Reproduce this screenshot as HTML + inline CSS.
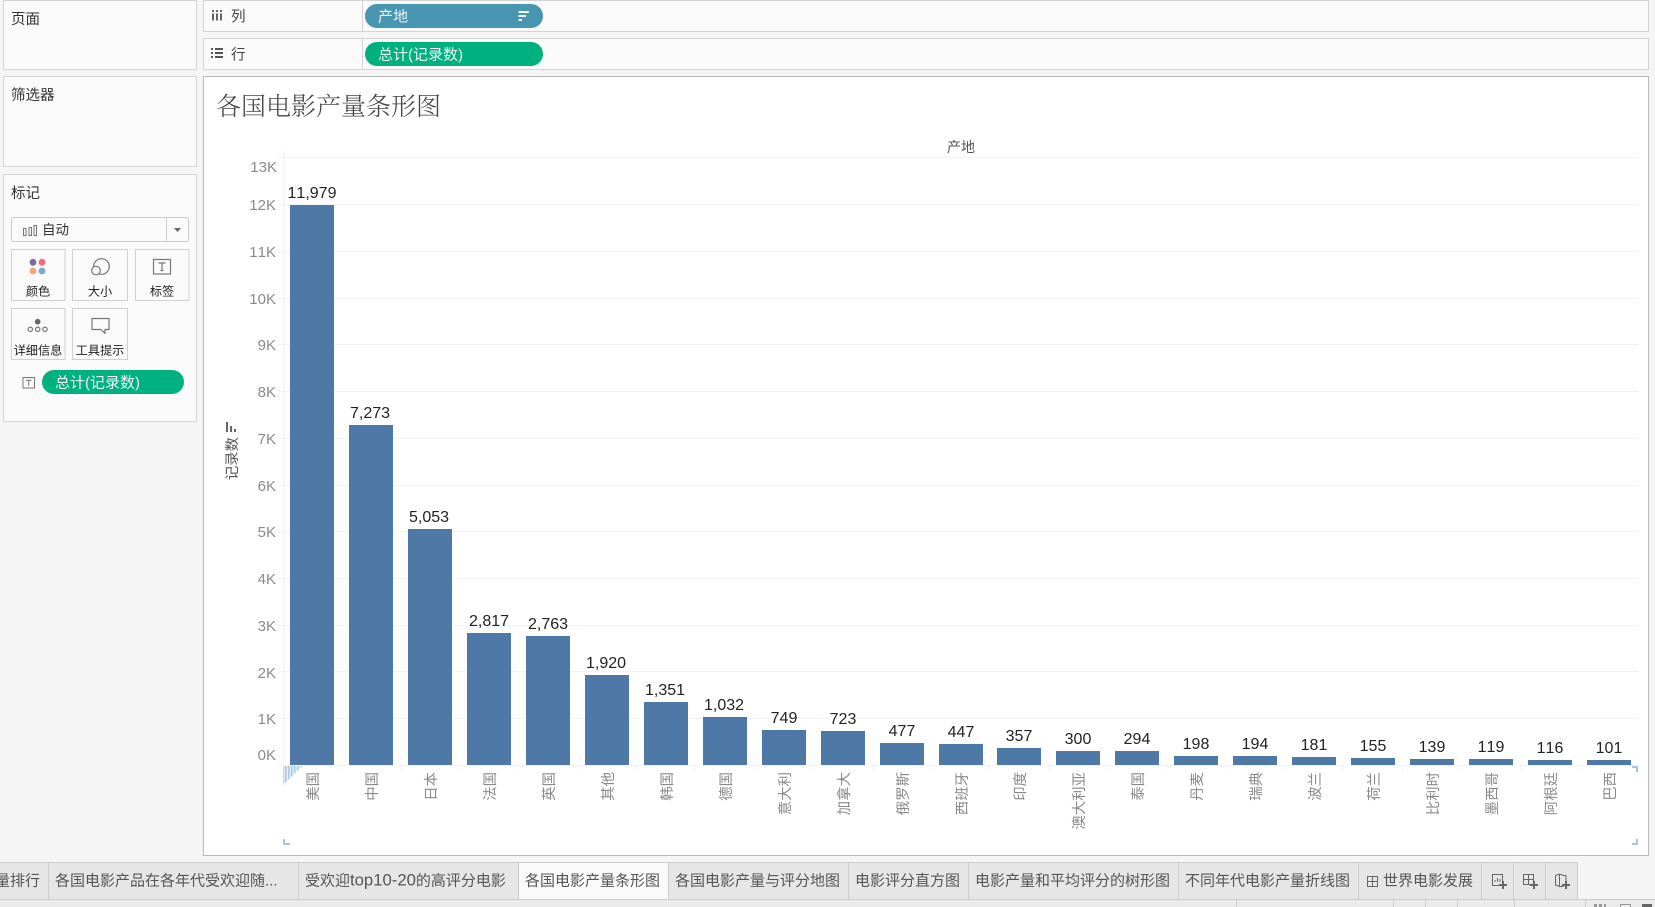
<!DOCTYPE html>
<html lang="zh">
<head>
<meta charset="utf-8">
<title>各国电影产量条形图</title>
<style>
html,body{margin:0;padding:0;width:1655px;height:907px;overflow:hidden;background:#f5f5f5}
svg{display:block}
text{font-family:"Liberation Sans","Noto Sans CJK SC",sans-serif;font-kerning:none}
.h{font-size:14.500px;fill:#333}
.s{font-size:14.500px;fill:#444}
.p{font-size:15px;fill:#eef6f8}
.b{font-size:12.200px;fill:#222;text-anchor:middle}
.t{font-size:15px;fill:#555}
.y{font-size:15px;fill:#8a8a8a;text-anchor:end}
.v{font-size:16px;fill:#222;text-anchor:middle}
.c{font-size:14.400px;fill:#8a8a8a;text-anchor:end}
.panel{fill:#fafafa;stroke:#d4d4d4;stroke-width:1}
.g{stroke:#f3f3f3;stroke-width:1}
.bar{fill:#4e79a7}
.ic{fill:none;stroke:#777;stroke-width:1.200}
</style>
</head>
<body>
<svg width="1655" height="907" viewBox="0 0 1655 907" xmlns="http://www.w3.org/2000/svg">
<defs>
<pattern id="hatch" width="3" height="3" patternUnits="userSpaceOnUse"><rect width="3" height="3" fill="#e3edf6"/><rect width="1.500" height="3" fill="#a9c8e2"/></pattern>
</defs>
<rect width="1655" height="907" fill="#f5f5f5"/>

<!-- left panels -->
<rect class="panel" x="3.500" y="0.500" width="193" height="69"/>
<text class="h" x="11" y="24">页面</text>
<rect class="panel" x="3.500" y="76.500" width="193" height="90"/>
<text class="h" x="11" y="100">筛选器</text>
<rect class="panel" x="3.500" y="174.500" width="193" height="247"/>
<text class="h" x="11" y="198">标记</text>

<!-- marks dropdown -->
<rect x="11.500" y="217.500" width="177" height="24" rx="2" fill="#fafafa" stroke="#ccc"/>
<line x1="166.500" y1="218" x2="166.500" y2="241" stroke="#ccc"/>
<g fill="none" stroke="#777" stroke-width="1"><rect x="23.500" y="228.500" width="2.500" height="7"/><rect x="29" y="227.500" width="2.500" height="8"/><rect x="34" y="225.500" width="2.500" height="10"/></g>
<text x="42" y="234.500" style="font-size:13.500px;fill:#333">自动</text>
<path d="M174 228h7l-3.500 4z" fill="#666"/>

<!-- marks buttons -->
<g fill="#fafafa" stroke="#d0d0d0">
<rect x="11.500" y="249.500" width="53.500" height="51"/>
<rect x="72.500" y="249.500" width="55" height="51"/>
<rect x="135.500" y="249.500" width="53.500" height="51"/>
<rect x="11.500" y="308.500" width="53.500" height="51"/>
<rect x="72.500" y="308.500" width="55" height="51"/>
</g>
<circle cx="33" cy="262.300" r="3.400" fill="#7b6a9c"/><circle cx="42" cy="262.300" r="3.400" fill="#f0697f"/>
<circle cx="33" cy="271" r="3.400" fill="#f2a77b"/><circle cx="42" cy="271" r="3.400" fill="#7ea6cf"/>
<circle class="ic" cx="101.500" cy="266.500" r="7.800"/><circle cx="96" cy="270.500" r="4.300" fill="#fafafa" stroke="#777" stroke-width="1.200"/>
<rect class="ic" x="153.500" y="259.500" width="17" height="14.500"/>
<path d="M158.500 263h7M162 263v7.500M160.500 270.500h3" fill="none" stroke="#777" stroke-width="1.200"/>
<circle cx="37.700" cy="321.700" r="2.800" fill="#666"/>
<g class="ic"><circle cx="30.300" cy="329.300" r="2.200"/><circle cx="37.700" cy="329.300" r="2.200"/><circle cx="45" cy="329.300" r="2.200"/></g>
<path class="ic" d="M92 318.500h17v11h-4v4l-4-4h-9z" stroke-linejoin="round"/>
<text class="b" x="38" y="295.500">颜色</text>
<text class="b" x="100" y="295.500">大小</text>
<text class="b" x="162" y="295.500">标签</text>
<text class="b" x="38" y="354.500">详细信息</text>
<text class="b" x="100" y="354.500">工具提示</text>

<rect x="23" y="377.500" width="11.500" height="10.500" fill="none" stroke="#777"/>
<path d="M26 380.300h5.500M28.700 380.300v5.500" fill="none" stroke="#777"/>
<rect x="42" y="370" width="142" height="24" rx="12" fill="#00b180"/>
<text class="p" x="55" y="387.500">总计(记录数)</text>

<!-- shelves -->
<rect class="panel" x="203.500" y="0.500" width="1445" height="31"/>
<line x1="362.500" y1="1" x2="362.500" y2="31" stroke="#d4d4d4"/>
<path d="M212 10h2v2h-2zM212 13.500h2v7h-2zM216 10h2v2h-2zM216 13.500h2v7h-2zM220 10h2v2h-2zM220 13.500h2v7h-2z" fill="#666"/>
<text class="s" x="231" y="21.500">列</text>
<rect x="365" y="4" width="178" height="24" rx="12" fill="#4996b2"/>
<text class="p" x="378" y="21.500">产地</text>
<path d="M518.500 11h10.500v2h-10.500zM518.500 15h7.500v2h-7.500zM518.500 19h3.500v2h-3.500z" fill="#fff"/>

<rect class="panel" x="203.500" y="38.500" width="1445" height="31"/>
<line x1="362.500" y1="39" x2="362.500" y2="69" stroke="#d4d4d4"/>
<path d="M211 48h2v2h-2zM215 48h8v2h-8zM211 52h2v2h-2zM215 52h8v2h-8zM211 56h2v2h-2zM215 56h8v2h-8z" fill="#555"/>
<text class="s" x="231" y="59.500">行</text>
<rect x="365" y="42" width="178" height="24" rx="12" fill="#00b180"/>
<text class="p" x="378" y="59.500">总计(记录数)</text>

<!-- view -->
<rect x="203.500" y="76.500" width="1445" height="779" fill="#fff" stroke="#b9b9b9"/>
<text x="216" y="115" style="font-family:'Liberation Serif','Noto Serif CJK SC',serif;font-size:25px;font-weight:300;fill:#444">各国电影产量条形图</text>
<text x="961" y="152" style="font-size:14px;fill:#555;text-anchor:middle">产地</text>

<!-- grid -->
<g class="g">
<line x1="278" y1="157.500" x2="1638" y2="157.500"/>
<line x1="278" y1="204.500" x2="1638" y2="204.500"/>
<line x1="278" y1="251.500" x2="1638" y2="251.500"/>
<line x1="278" y1="298.500" x2="1638" y2="298.500"/>
<line x1="278" y1="344.500" x2="1638" y2="344.500"/>
<line x1="278" y1="391.500" x2="1638" y2="391.500"/>
<line x1="278" y1="438.500" x2="1638" y2="438.500"/>
<line x1="278" y1="485.500" x2="1638" y2="485.500"/>
<line x1="278" y1="531.500" x2="1638" y2="531.500"/>
<line x1="278" y1="578.500" x2="1638" y2="578.500"/>
<line x1="278" y1="625.500" x2="1638" y2="625.500"/>
<line x1="278" y1="671.500" x2="1638" y2="671.500"/>
<line x1="278" y1="718.500" x2="1638" y2="718.500"/>
<line x1="278" y1="765.500" x2="1638" y2="765.500"/>
<line x1="283.500" y1="150" x2="283.500" y2="770"/>
<line x1="341.500" y1="766" x2="341.500" y2="770"/><line x1="400.500" y1="766" x2="400.500" y2="770"/><line x1="459.500" y1="766" x2="459.500" y2="770"/><line x1="518.500" y1="766" x2="518.500" y2="770"/><line x1="577.500" y1="766" x2="577.500" y2="770"/><line x1="636.500" y1="766" x2="636.500" y2="770"/><line x1="695.500" y1="766" x2="695.500" y2="770"/><line x1="754.500" y1="766" x2="754.500" y2="770"/><line x1="813.500" y1="766" x2="813.500" y2="770"/><line x1="872.500" y1="766" x2="872.500" y2="770"/><line x1="931.500" y1="766" x2="931.500" y2="770"/><line x1="989.500" y1="766" x2="989.500" y2="770"/><line x1="1048.500" y1="766" x2="1048.500" y2="770"/><line x1="1107.500" y1="766" x2="1107.500" y2="770"/><line x1="1166.500" y1="766" x2="1166.500" y2="770"/><line x1="1225.500" y1="766" x2="1225.500" y2="770"/><line x1="1284.500" y1="766" x2="1284.500" y2="770"/><line x1="1343.500" y1="766" x2="1343.500" y2="770"/><line x1="1402.500" y1="766" x2="1402.500" y2="770"/><line x1="1461.500" y1="766" x2="1461.500" y2="770"/><line x1="1520.500" y1="766" x2="1520.500" y2="770"/><line x1="1579.500" y1="766" x2="1579.500" y2="770"/>
</g>

<!-- y labels -->
<text class="y" x="277" y="172">13K</text>
<text class="y" x="276" y="210">12K</text>
<text class="y" x="276" y="257">11K</text>
<text class="y" x="276" y="304">10K</text>
<text class="y" x="276" y="350">9K</text>
<text class="y" x="276" y="397">8K</text>
<text class="y" x="276" y="444">7K</text>
<text class="y" x="276" y="491">6K</text>
<text class="y" x="276" y="537">5K</text>
<text class="y" x="276" y="584">4K</text>
<text class="y" x="276" y="631">3K</text>
<text class="y" x="276" y="678">2K</text>
<text class="y" x="276" y="724">1K</text>
<text class="y" x="276" y="760">0K</text>

<!-- y title -->
<path d="M226 422h2v10h-2zM230 426h2v6h-2zM234 429h2v3h-2z" fill="#666"/>
<text transform="translate(237 480) rotate(-90)" style="font-size:14.300px;fill:#555">记录数</text>

<!-- bars -->
<rect class="bar" x="290" y="205" width="44" height="560"/>
<rect class="bar" x="349" y="425" width="44" height="340"/>
<rect class="bar" x="408" y="529" width="44" height="236"/>
<rect class="bar" x="467" y="633" width="44" height="132"/>
<rect class="bar" x="526" y="636" width="44" height="129"/>
<rect class="bar" x="585" y="675" width="44" height="90"/>
<rect class="bar" x="644" y="702" width="44" height="63"/>
<rect class="bar" x="703" y="717" width="44" height="48"/>
<rect class="bar" x="762" y="730" width="44" height="35"/>
<rect class="bar" x="821" y="731" width="44" height="34"/>
<rect class="bar" x="880" y="743" width="44" height="22"/>
<rect class="bar" x="939" y="744" width="44" height="21"/>
<rect class="bar" x="997" y="748" width="44" height="17"/>
<rect class="bar" x="1056" y="751" width="44" height="14"/>
<rect class="bar" x="1115" y="751" width="44" height="14"/>
<rect class="bar" x="1174" y="756" width="44" height="9"/>
<rect class="bar" x="1233" y="756" width="44" height="9"/>
<rect class="bar" x="1292" y="757" width="44" height="8"/>
<rect class="bar" x="1351" y="758" width="44" height="7"/>
<rect class="bar" x="1410" y="759" width="44" height="6"/>
<rect class="bar" x="1469" y="759" width="44" height="6"/>
<rect class="bar" x="1528" y="760" width="44" height="5"/>
<rect class="bar" x="1587" y="760" width="44" height="5"/>

<!-- values -->
<text class="v" x="312" y="198">11,979</text>
<text class="v" x="370" y="418">7,273</text>
<text class="v" x="429" y="522">5,053</text>
<text class="v" x="489" y="626">2,817</text>
<text class="v" x="548" y="629">2,763</text>
<text class="v" x="606" y="668">1,920</text>
<text class="v" x="665" y="695">1,351</text>
<text class="v" x="724" y="710">1,032</text>
<text class="v" x="784" y="723">749</text>
<text class="v" x="843" y="724">723</text>
<text class="v" x="902" y="736">477</text>
<text class="v" x="961" y="737">447</text>
<text class="v" x="1019" y="741">357</text>
<text class="v" x="1078" y="744">300</text>
<text class="v" x="1137" y="744">294</text>
<text class="v" x="1196" y="749">198</text>
<text class="v" x="1255" y="749">194</text>
<text class="v" x="1314" y="750">181</text>
<text class="v" x="1373" y="751">155</text>
<text class="v" x="1432" y="752">139</text>
<text class="v" x="1491" y="752">119</text>
<text class="v" x="1550" y="753">116</text>
<text class="v" x="1609" y="753">101</text>

<!-- categories -->
<text class="c" transform="translate(318 772) rotate(-90)">美国</text>
<text class="c" transform="translate(377 772) rotate(-90)">中国</text>
<text class="c" transform="translate(436 772) rotate(-90)">日本</text>
<text class="c" transform="translate(495 772) rotate(-90)">法国</text>
<text class="c" transform="translate(554 772) rotate(-90)">英国</text>
<text class="c" transform="translate(613 772) rotate(-90)">其他</text>
<text class="c" transform="translate(672 772) rotate(-90)">韩国</text>
<text class="c" transform="translate(731 772) rotate(-90)">德国</text>
<text class="c" transform="translate(790 772) rotate(-90)">意大利</text>
<text class="c" transform="translate(849 772) rotate(-90)">加拿大</text>
<text class="c" transform="translate(908 772) rotate(-90)">俄罗斯</text>
<text class="c" transform="translate(967 772) rotate(-90)">西班牙</text>
<text class="c" transform="translate(1025 772) rotate(-90)">印度</text>
<text class="c" transform="translate(1084 772) rotate(-90)">澳大利亚</text>
<text class="c" transform="translate(1143 772) rotate(-90)">泰国</text>
<text class="c" transform="translate(1202 772) rotate(-90)">丹麦</text>
<text class="c" transform="translate(1261 772) rotate(-90)">瑞典</text>
<text class="c" transform="translate(1320 772) rotate(-90)">波兰</text>
<text class="c" transform="translate(1379 772) rotate(-90)">荷兰</text>
<text class="c" transform="translate(1438 772) rotate(-90)">比利时</text>
<text class="c" transform="translate(1497 772) rotate(-90)">墨西哥</text>
<text class="c" transform="translate(1556 772) rotate(-90)">阿根廷</text>
<text class="c" transform="translate(1615 772) rotate(-90)">巴西</text>

<!-- corner marks -->
<path d="M283 766h19l-19 19z" fill="url(#hatch)"/>
<path d="M283 839h2v4h5v2h-7z" fill="#a9c4dc"/>
<path d="M1632 843h4v-4h2v6h-6z" fill="#a9c4dc"/>
<path d="M1632 766h6v6h-2v-4h-4z" fill="#a9c4dc"/>

<!-- tabs -->
<rect x="0" y="862" width="1577" height="37" fill="#e6e6e6"/>
<rect x="0" y="899" width="1655" height="8" fill="#ebebeb"/>
<rect x="518" y="862" width="150" height="37" fill="#fafafa"/>
<path d="M0 862.500H1577M0 899.500H1655" stroke="#ccc" fill="none"/>
<g stroke="#ccc">
<line x1="48.500" y1="862" x2="48.500" y2="899"/>
<line x1="298.500" y1="862" x2="298.500" y2="899"/>
<line x1="518.500" y1="862" x2="518.500" y2="899"/>
<line x1="668.500" y1="862" x2="668.500" y2="899"/>
<line x1="848.500" y1="862" x2="848.500" y2="899"/>
<line x1="968.500" y1="862" x2="968.500" y2="899"/>
<line x1="1178.500" y1="862" x2="1178.500" y2="899"/>
<line x1="1358.500" y1="862" x2="1358.500" y2="899"/>
<line x1="1481.500" y1="862" x2="1481.500" y2="899"/>
<line x1="1513.500" y1="862" x2="1513.500" y2="899"/>
<line x1="1545.500" y1="862" x2="1545.500" y2="899"/>
<line x1="1577.500" y1="862" x2="1577.500" y2="899"/>
<line x1="1236.500" y1="899" x2="1236.500" y2="907"/>
<line x1="1393.500" y1="899" x2="1393.500" y2="907"/>
<line x1="1425.500" y1="899" x2="1425.500" y2="907"/>
<line x1="1457.500" y1="899" x2="1457.500" y2="907"/>
<line x1="1514.500" y1="899" x2="1514.500" y2="907"/>
<line x1="1585.500" y1="899" x2="1585.500" y2="907"/>
</g>
<text class="t" x="-5" y="885.500">量排行</text>
<text class="t" x="55" y="885.500">各国电影产品在各年代受欢迎随...</text>
<text class="t" x="305" y="885.500">受欢迎<tspan style="font-size:16.700px">top10-20</tspan>的高评分电影</text>
<text class="t" x="525" y="885.500">各国电影产量条形图</text>
<text class="t" x="675" y="885.500">各国电影产量与评分地图</text>
<text class="t" x="855" y="885.500">电影评分直方图</text>
<text class="t" x="975" y="885.500">电影产量和平均评分的树形图</text>
<text class="t" x="1185" y="885.500">不同年代电影产量折线图</text>
<path d="M1367.500 876.500h10v10h-10zM1372.500 876.500v10M1367.500 881.500h10" fill="none" stroke="#666"/>
<text class="t" x="1383" y="885.500">世界电影发展</text>

<!-- tab add icons -->
<g fill="none" stroke="#666">
<path d="M1502.500 882v-7.500h-10v11h7"/><path d="M1495 882v-2M1497.500 882v-4M1500 882v-3"/>
<path d="M1533.500 881v-6.500h-10v10h7M1528.500 874.500v10M1523.500 879.500h10"/>
<path d="M1555.500 875.500l4 -1.500 4 1.500h2.500v6M1555.500 875.500v9.500l4 1.500h4M1559.500 874v12"/>
</g>
<path d="M1502 881h2v3h3v2h-3v3h-2v-3h-3v-2h3zM1533 881h2v3h3v2h-3v3h-2v-3h-3v-2h3zM1565 881h2v3h3v2h-3v3h-2v-3h-3v-2h3z" fill="#666"/>

<!-- status bar icons -->
<path d="M1594 904h3v3h-3zM1599 904h3v3h-3zM1604 904h2v3h-2z" fill="#999"/>
<rect x="1620.500" y="904.500" width="10" height="3" fill="none" stroke="#999"/>
<rect x="1642" y="904" width="10" height="3" fill="#666"/>
</svg>
</body>
</html>
